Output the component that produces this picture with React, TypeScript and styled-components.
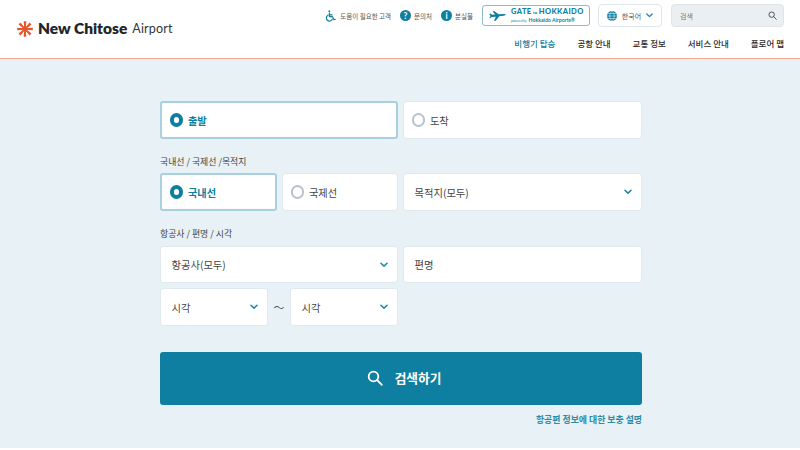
import React from "react";
import styled, { createGlobalStyle } from "styled-components";

const Global = createGlobalStyle`
  html, body { margin: 0; padding: 0; background: #fff; }
  body { font-family: "Noto Sans CJK KR", "Noto Sans", sans-serif; color: #333; }
  * { box-sizing: border-box; }
`;

const Page = styled.div`
  width: 800px;
  height: 450px;
  overflow: hidden;
  background: #fff;
  display: flex;
  flex-direction: column;
`;

const Header = styled.header`
  height: 59px;
  flex: none;
  border-bottom: 1px solid #f7a58f;
  display: flex;
  justify-content: space-between;
  padding: 4px 16px 0 17px;
`;

const Logo = styled.div`
  display: flex;
  align-items: center;
  gap: 5px;
  height: 50px;
`;

const LogoName = styled.span`
  font: 800 15.5px/1 Lato, sans-serif;
  color: #22252b;
`;

const LogoSub = styled.span`
  font: 400 12.5px/1 Lato, sans-serif;
  color: #33363c;
  letter-spacing: 0.2px;
`;

const HeaderRight = styled.div`
  display: flex;
  flex-direction: column;
  align-items: flex-end;
`;

const Utility = styled.div`
  display: flex;
  align-items: center;
  height: 23px;
`;

const UtilLink = styled.span<{ $gap: number }>`
  display: flex;
  align-items: center;
  gap: 3px;
  font-size: 6.5px;
  color: #555;
  margin-right: ${(p) => p.$gap}px;
`;

const Gate = styled.div`
  width: 108px;
  height: 21px;
  border: 1px solid #8bbccd;
  border-radius: 3px;
  display: flex;
  align-items: center;
  padding-left: 6px;
  gap: 5px;
  margin-right: 8px;
`;

const GateText = styled.div`
  display: flex;
  flex-direction: column;
  line-height: 1;
  font-family: Lato, sans-serif;
  color: #0e7fa0;
  flex: 1;
`;

const GateTitle = styled.span`
  font-size: 7.5px;
  font-weight: 900;
  letter-spacing: 0.4px;
  white-space: nowrap;
`;

const GateTo = styled.span`
  font-size: 4.5px;
  margin: 0 1.5px;
  letter-spacing: 0;
`;

const GateSmall = styled.span`
  font-size: 5.2px;
  font-weight: 700;
  margin-top: 2px;
  white-space: nowrap;
  display: flex;
  align-items: baseline;
  gap: 2px;
`;

const GateBy = styled.span`
  font-size: 3px;
  font-weight: 400;
`;

const Lang = styled.div`
  width: 64px;
  height: 23px;
  background: #fff;
  border: 1px solid #dfe7ec;
  border-radius: 4px;
  display: flex;
  align-items: center;
  justify-content: center;
  gap: 5px;
  font-size: 7px;
  color: #555;
  margin-right: 9px;
`;

const SearchBox = styled.div`
  width: 113px;
  height: 23px;
  background: #ebeff2;
  border: 1px solid #e0e5e9;
  border-radius: 4px;
  display: flex;
  align-items: center;
  justify-content: space-between;
  padding: 0 6px 0 8px;
  font-size: 7px;
  color: #777;
`;

const Nav = styled.nav`
  display: flex;
  gap: 22px;
  margin-top: 7px;
  font-size: 8.5px;
  line-height: 18px;
`;

const NavItem = styled.span<{ $active?: boolean }>`
  color: ${(p) => (p.$active ? "#0e7fa0" : "#2a2a2a")};
  font-weight: 500;
  white-space: nowrap;
`;

const Main = styled.main`
  height: 389px;
  flex: none;
  background: #e8f1f5;
  padding: 42px 158px 0 160px;
`;

const Row = styled.div<{ $top?: number }>`
  display: flex;
  gap: 5px;
  margin-top: ${(p) => p.$top ?? 0}px;
`;

const FieldLabel = styled.div<{ $top: number; $bottom: number }>`
  margin-top: ${(p) => p.$top}px;
  height: 12px;
  font-size: 8.9px;
  line-height: 12px;
  color: #444;
  margin-bottom: ${(p) => p.$bottom}px;
`;

const Choice = styled.div<{ $on?: boolean; $w: number }>`
  width: ${(p) => p.$w}px;
  flex: none;
  height: 38px;
  background: #fff;
  border: ${(p) => (p.$on ? "2px solid #a9d0df" : "1px solid #dfe9ee")};
  border-radius: 3px;
  display: flex;
  align-items: center;
  gap: 5px;
  padding-left: 7.5px;
  font-size: 10.2px;
  font-weight: ${(p) => (p.$on ? 600 : 400)};
  color: ${(p) => (p.$on ? "#0e7fa0" : "#444")};
`;

const Radio = styled.span<{ $on?: boolean }>`
  width: 13.5px;
  height: 13.5px;
  flex: none;
  border-radius: 50%;
  background: #fff;
  border: ${(p) => (p.$on ? "4px solid #0e7fa0" : "2px solid #b5c3cd")};
`;

const Select = styled.div<{ $w: number; $h?: number }>`
  width: ${(p) => p.$w}px;
  flex: none;
  height: ${(p) => p.$h ?? 38}px;
  background: #fff;
  border: 1px solid #dfe9ee;
  border-radius: 3px;
  display: flex;
  align-items: center;
  justify-content: space-between;
  padding: 0 9px 0 10.5px;
  font-size: 10.3px;
  color: #444;
`;

const Tilde = styled.span`
  width: 22px;
  flex: none;
  margin: 0 -5px;
  text-align: center;
  align-self: center;
  font-size: 11px;
  color: #555;
`;

const SearchButton = styled.div`
  margin-top: 26px;
  width: 482px;
  height: 53px;
  background: #0e7fa0;
  border-radius: 3px;
  display: flex;
  align-items: center;
  justify-content: center;
  gap: 12px;
  font-size: 12.7px;
  font-weight: 600;
  color: #fff;
  padding: 0 0 2px 6px;
`;

const Note = styled.div`
  margin-top: 8px;
  width: 482px;
  text-align: right;
  font-size: 8.9px;
  line-height: 13px;
  font-weight: 600;
  color: #2f8aa6;
`;

const Star = () => (
  <svg width="16" height="16" viewBox="-8 -8 16 16">
    {[0, 45, 90, 135, 180, 225, 270, 315].map((a) => (
      <path key={a} d="M-0.7 0-1.3-7.8H1.3L0.7 0Z" fill="#e8532b" transform={`rotate(${a})`} />
    ))}
    <circle r="2.4" fill="#e8532b" />
  </svg>
);

const Chevron = ({ size = 8, color = "#1d88aa" }: { size?: number; color?: string }) => (
  <svg width={size} height={size * 0.7} viewBox="0 0 10 7" fill="none">
    <path d="M1.2 1.5 5 5.2l3.8-3.7" stroke={color} strokeWidth="1.9" strokeLinecap="round" strokeLinejoin="round" />
  </svg>
);

const Magnifier = ({ size, color, sw }: { size: number; color: string; sw: number }) => (
  <svg width={size} height={size} viewBox="0 0 16 16" fill="none">
    <circle cx="6.5" cy="6.5" r="4.8" stroke={color} strokeWidth={sw} />
    <path d="m10.2 10.2 4.6 4.6" stroke={color} strokeWidth={sw} strokeLinecap="round" />
  </svg>
);

const Badge = ({ ch }: { ch: string }) => (
  <svg width="11" height="11" viewBox="0 0 11 11">
    <circle cx="5.5" cy="5.5" r="5.5" fill="#0e7fa0" />
    <text x="5.5" y="8.6" textAnchor="middle" fontSize="8.5" fontWeight="700" fontFamily="Lato, sans-serif" fill="#fff">
      {ch}
    </text>
  </svg>
);

const Wheelchair = () => (
  <svg width="12" height="12" viewBox="0 0 12 12" fill="none" stroke="#0e7fa0" strokeWidth="1.2" strokeLinecap="round" strokeLinejoin="round">
    <circle cx="4.3" cy="1.2" r="0.9" fill="#0e7fa0" stroke="none" />
    <path d="M4.4 3v3.6h3l1.6 3.2 1.3-.5" />
    <path d="M4.4 4.8h2.8" />
    <path d="M3 5.2a3.1 3.1 0 1 0 4.3 3.9" />
  </svg>
);

const Plane = () => (
  <svg width="17" height="10" viewBox="0 0 18 11" fill="#0e7fa0">
    <path d="M0 3.2 1.2 2.8l2 1.2 3.2-.2L3.6.3 5.2 0l5 3.6 5.3-.4c1.6-.1 2.5.5 2.5 1s-.9.9-2.4 1.1l-4.6.5-4.2 5.2-1.6.2 1.9-5-4.6.5L.9 7.9 0 7.9l1.3-2.4z" />
  </svg>
);

const Globe = () => (
  <svg width="10" height="10" viewBox="0 0 10 10" fill="none">
    <circle cx="5" cy="5" r="5" fill="#0e7fa0" />
    <path d="M0 5h10M5 0c-3 3-3 7 0 10M5 0c3 3 3 7 0 10M1 2.5h8M1 7.5h8" stroke="#fff" strokeWidth="0.5" />
  </svg>
);

export default function App() {
  return (
    <Page>
      <Global />
      <Header>
        <Logo>
          <Star />
          <LogoName>New Chitose</LogoName>
          <LogoSub>Airport</LogoSub>
        </Logo>
        <HeaderRight>
          <Utility>
            <UtilLink $gap={9}>
              <Wheelchair />
              도움이 필요한 고객
            </UtilLink>
            <UtilLink $gap={9}>
              <Badge ch="?" />
              문의처
            </UtilLink>
            <UtilLink $gap={9}>
              <Badge ch="i" />
              분실물
            </UtilLink>
            <Gate>
              <Plane />
              <GateText>
                <GateTitle>
                  GATE<GateTo>to</GateTo>HOKKAIDO
                </GateTitle>
                <GateSmall>
                  <GateBy>powered by</GateBy>
                  Hokkaido Airports®
                </GateSmall>
              </GateText>
            </Gate>
            <Lang>
              <Globe />
              한국어
              <Chevron size={7} />
            </Lang>
            <SearchBox>
              검색
              <Magnifier size={9} color="#444" sw={1.6} />
            </SearchBox>
          </Utility>
          <Nav>
            <NavItem $active>비행기 탑승</NavItem>
            <NavItem>공항 안내</NavItem>
            <NavItem>교통 정보</NavItem>
            <NavItem>서비스 안내</NavItem>
            <NavItem>플로어 맵</NavItem>
          </Nav>
        </HeaderRight>
      </Header>
      <Main>
        <Row>
          <Choice $on $w={238}>
            <Radio $on />
            출발
          </Choice>
          <Choice $w={239}>
            <Radio />
            도착
          </Choice>
        </Row>
        <FieldLabel $top={17} $bottom={5}>국내선 / 국제선 /목적지</FieldLabel>
        <Row>
          <Choice $on $w={117}>
            <Radio $on />
            국내선
          </Choice>
          <Choice $w={116}>
            <Radio />
            국제선
          </Choice>
          <Select $w={239}>
            목적지(모두)
            <Chevron />
          </Select>
        </Row>
        <FieldLabel $top={17} $bottom={6}>항공사 / 편명 / 시각</FieldLabel>
        <Row>
          <Select $w={238} $h={37}>
            항공사(모두)
            <Chevron />
          </Select>
          <Select $w={239} $h={37}>편명</Select>
        </Row>
        <Row $top={5}>
          <Select $w={108}>
            시각
            <Chevron />
          </Select>
          <Tilde>〜</Tilde>
          <Select $w={108}>
            시각
            <Chevron />
          </Select>
        </Row>
        <SearchButton>
          <Magnifier size={16} color="#fff" sw={1.8} />
          검색하기
        </SearchButton>
        <Note>항공편 정보에 대한 보충 설명</Note>
      </Main>
    </Page>
  );
}
